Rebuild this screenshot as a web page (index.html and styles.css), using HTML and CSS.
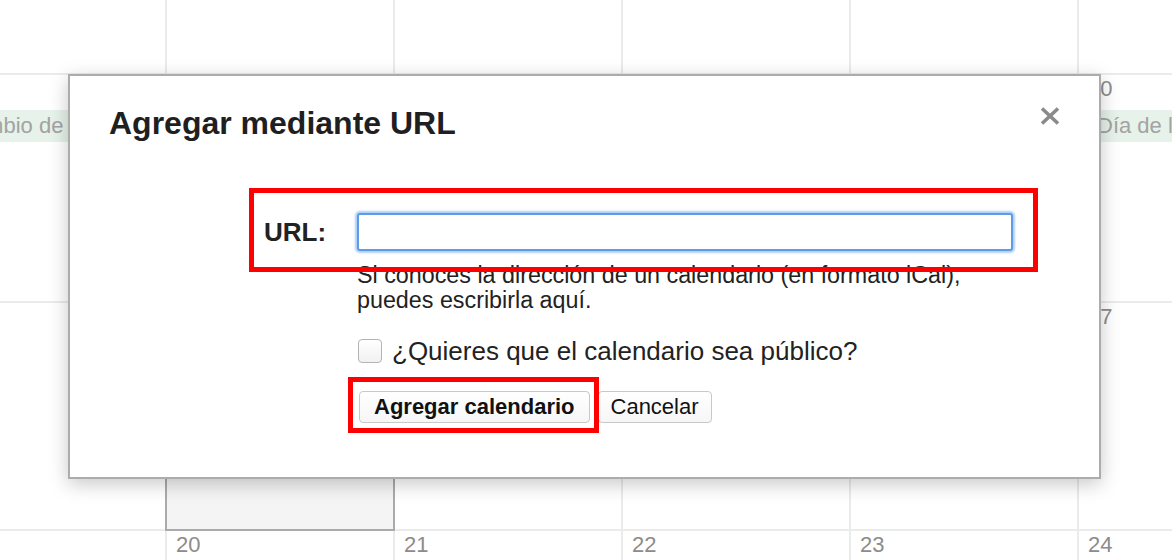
FILE: index.html
```html
<!DOCTYPE html>
<html lang="es">
<head>
<meta charset="utf-8">
<title>Agregar mediante URL</title>
<link rel="stylesheet" href="styles.css">
</head>
<body>
<div class="viewport">
<div class="cal">
  <div class="cell"></div>
  <div class="cell"></div>
  <div class="cell"></div>
  <div class="cell"></div>
  <div class="cell"></div>
  <div class="cell"></div>

  <div class="cell"><span class="num">5</span><div class="chip">Cambio de hora</div></div>
  <div class="cell"><span class="num">6</span></div>
  <div class="cell"><span class="num">7</span></div>
  <div class="cell"><span class="num">8</span></div>
  <div class="cell"><span class="num">9</span></div>
  <div class="cell"><span class="num">10</span><div class="chip">Día de la Hispanidad</div></div>

  <div class="cell"><span class="num">12</span></div>
  <div class="cell today"><span class="num">13</span></div>
  <div class="cell"><span class="num">14</span></div>
  <div class="cell"><span class="num">15</span></div>
  <div class="cell"><span class="num">16</span></div>
  <div class="cell"><span class="num">17</span></div>

  <div class="cell"><span class="num">19</span></div>
  <div class="cell"><span class="num">20</span></div>
  <div class="cell"><span class="num">21</span></div>
  <div class="cell"><span class="num">22</span></div>
  <div class="cell"><span class="num">23</span></div>
  <div class="cell"><span class="num">24</span></div>
</div>
</div>

<div class="modal">
  <button class="close" aria-label="Cerrar">
    <svg width="20" height="18" viewBox="0 0 20 18"><path d="M2 1.5 L18 16.5 M18 1.5 L2 16.5" stroke="#8a8a8a" stroke-width="3.6" fill="none"/></svg>
  </button>
  <h1 class="title">Agregar mediante URL</h1>
  <div class="form">
    <label class="url-label" for="url">URL:</label>
    <input class="url-input" id="url" type="text">
    <div class="content">
      <p class="help">Si conoces la dirección de un calendario (en formato iCal),<br>puedes escribirla aquí.</p>
      <label class="check"><span class="box"></span>¿Quieres que el calendario sea público?</label>
      <div class="actions">
        <button class="btn primary">Agregar calendario</button>
        <button class="btn">Cancelar</button>
      </div>
    </div>
  </div>
  <div class="mark mark-url"></div>
  <div class="mark mark-btn"></div>
</div>
</body>
</html>
```
FILE: styles.css
```css
html, body {
  margin: 0;
  padding: 0;
}
body {
  width: 1172px;
  height: 560px;
  overflow: hidden;
  background: #fff;
  font-family: "Liberation Sans", Arial, sans-serif;
  position: relative;
}

.viewport {
  width: 1172px;
  height: 560px;
  overflow: hidden;
}
.cal {
  display: grid;
  grid-template-columns: repeat(6, 226px);
  grid-auto-rows: 226px;
  gap: 2px;
  background: #ebebeb;
  width: max-content;
  margin-left: -61px;
  margin-top: -153px;
}
.cell {
  background: #fff;
  padding: 1px 0 0 0;
  overflow: hidden;
}
.cell.today {
  background: #f4f4f4;
  outline: 2px solid #ababab;
  position: relative;
  z-index: 1;
}
.num {
  display: block;
  padding-left: 9px;
  font-size: 22px;
  line-height: 25px;
  color: #8c8c8c;
}
.chip {
  margin: 9px 2px 0 2px;
  height: 32px;
  line-height: 32px;
  padding-left: 16px;
  background: #e6f2ea;
  color: #a3a3a3;
  font-size: 22px;
  white-space: nowrap;
  overflow: hidden;
}

.modal {
  position: absolute;
  left: 68px;
  top: 74px;
  width: 1033px;
  height: 405px;
  box-sizing: border-box;
  border: 2px solid #acacac;
  background: #fff;
  box-shadow: 0 5px 18px rgba(0, 0, 0, 0.22);
  padding: 29px 39px 0 39px;
  z-index: 5;
}
.close {
  position: absolute;
  top: 31px;
  right: 39px;
  width: 20px;
  height: 18px;
  padding: 0;
  border: 0;
  background: none;
  display: block;
}
.close svg {
  display: block;
}
.title {
  margin: 0;
  font-size: 32px;
  line-height: 37px;
  font-weight: bold;
  color: #1f1f1f;
}

.form {
  margin: 71px 0 0 155px;
  display: grid;
  grid-template-columns: 93px 656px;
  align-items: center;
}
.url-label {
  font-size: 26px;
  line-height: 30px;
  font-weight: bold;
  color: #222;
}
.url-input {
  width: 656px;
  height: 38px;
  box-sizing: border-box;
  margin: 0;
  border: 2px solid #5e9de6;
  border-radius: 3px;
  box-shadow: 0 0 2px 2px rgba(120, 175, 240, 0.6);
  outline: none;
  background: #fff;
  font-family: inherit;
  font-size: 22px;
}
.content {
  grid-column: 2;
}
.help {
  margin: 12px 0 0 0;
  font-size: 23.3px;
  line-height: 25px;
  color: #222;
}
.check {
  margin-top: 23px;
  display: flex;
  align-items: center;
  gap: 10px;
  font-size: 26px;
  line-height: 30px;
  color: #222;
}
.box {
  margin-left: 1px;
  width: 24px;
  height: 24px;
  box-sizing: border-box;
  border: 1px solid #b4b4b4;
  border-radius: 4px;
  background: linear-gradient(#ffffff, #f1f1f1);
}
.actions {
  margin: 25px 0 0 2px;
  display: flex;
  gap: 8px;
}
.btn {
  height: 32px;
  box-sizing: border-box;
  margin: 0;
  padding: 0 12px;
  border: 1px solid #c8c8c8;
  border-radius: 4px;
  background: linear-gradient(#ffffff, #f6f6f6);
  font-family: inherit;
  font-size: 22px;
  line-height: 30px;
  color: #111;
}
.btn.primary {
  font-weight: bold;
  padding: 0 14px;
}

.mark {
  position: absolute;
  box-sizing: border-box;
  border: 5px solid #ff0000;
  pointer-events: none;
}
.mark-url {
  left: 179px;
  top: 112px;
  width: 789px;
  height: 84px;
}
.mark-btn {
  left: 278px;
  top: 301px;
  width: 251px;
  height: 56px;
}
```
